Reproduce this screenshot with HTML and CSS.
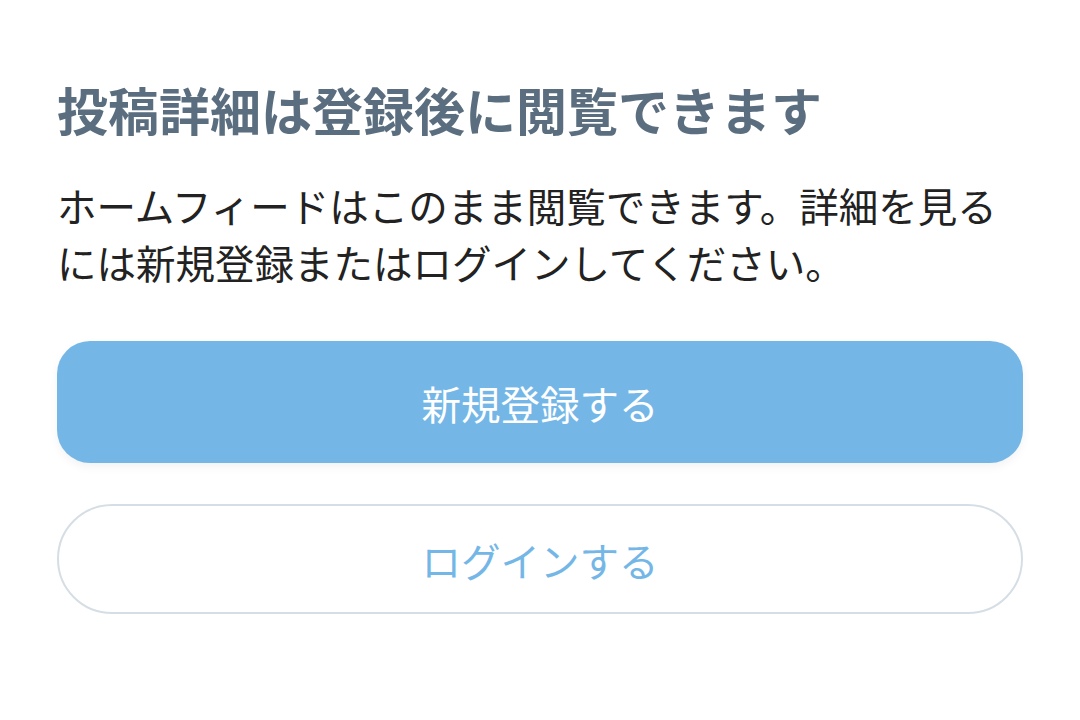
FILE: index.html
```html
<!DOCTYPE html>
<html lang="ja">
<head>
  <meta charset="UTF-8" />
  <title>投稿詳細</title>
  <link rel="stylesheet" href="styles.css">
</head>
<body>
  <div class="gate">
    <h2 class="gate-title">投稿詳細は登録後に閲覧できます</h2>
    <p class="gate-text">ホームフィードはこのまま閲覧できます。詳細を見るには新規登録またはログインしてください。</p>
    <div class="gate-actions">
      <button class="btn btn-primary">新規登録する</button>
      <button class="btn btn-outline">ログインする</button>
    </div>
  </div>
</body>
</html>
```

FILE: styles.css
```css
body {
  margin: 0;
  background-color: #fff;
  font-family: "Noto Sans CJK JP", "Noto Sans", sans-serif;
}

.gate {
  padding: 74px 57px 0;
}

.gate-title {
  margin: 0;
  font-size: 51px;
  line-height: 71px;
  font-weight: 700;
  color: #5b6e7f;
}

.gate-text {
  margin: 31px 0 0;
  font-size: 39.5px;
  line-height: 57px;
  color: #222;
}

.gate-actions {
  display: flex;
  flex-direction: column;
  gap: 41px;
  margin-top: 51px;
}

.btn {
  width: 100%;
  font-family: inherit;
  font-size: 39.5px;
  border: none;
  cursor: pointer;
}

.btn-primary {
  height: 122px;
  background-color: #74b7e7;
  color: #fff;
  border-radius: 33px;
  box-shadow: 0 4px 10px rgba(0, 0, 0, 0.05);
}

.btn-outline {
  height: 110px;
  background-color: #fff;
  color: #74b7e7;
  border: 2px solid #d6dee5;
  border-radius: 55px;
}
```
